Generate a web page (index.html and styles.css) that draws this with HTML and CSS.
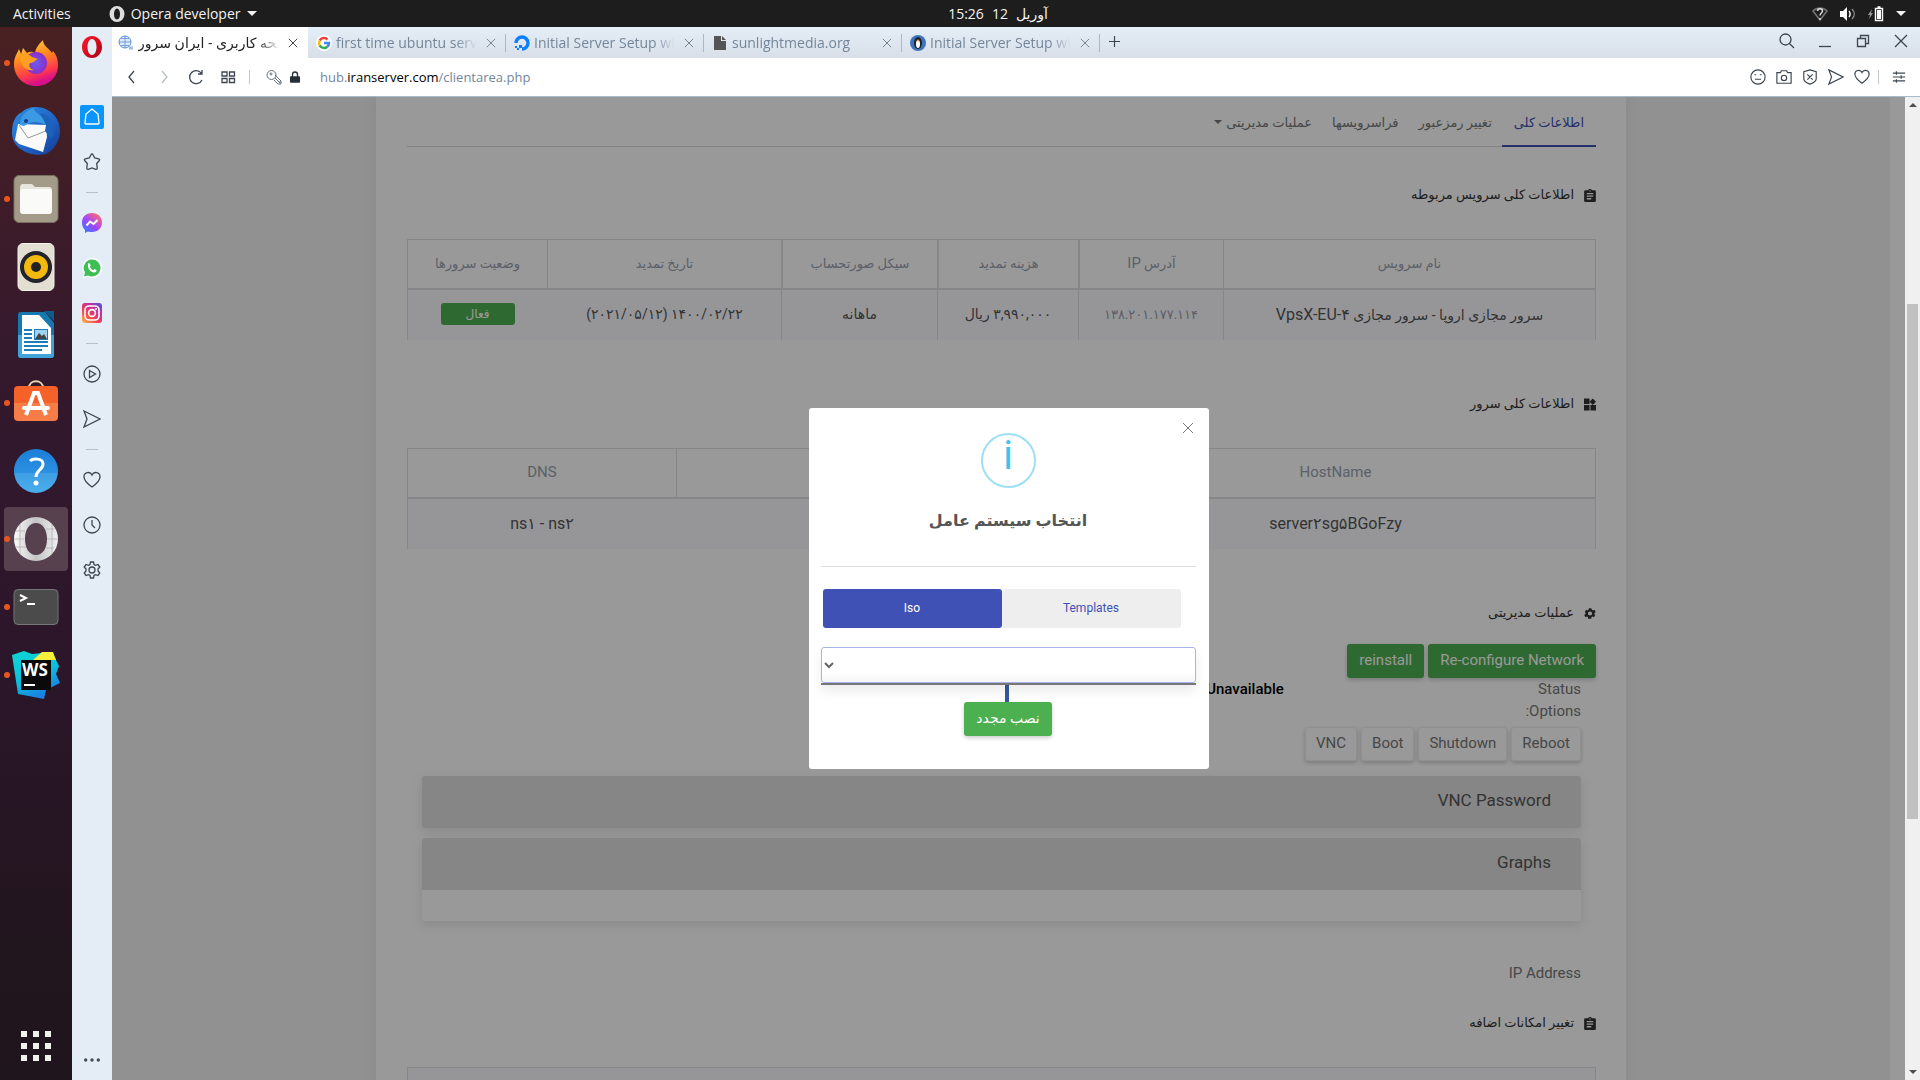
FILE: index.html
```html
<!DOCTYPE html>
<html lang="en">
<head>
<meta charset="utf-8">
<title>ایران سرور</title>
<link rel="stylesheet" href="styles.css">
</head>
<body>
<svg class="defs" aria-hidden="true">
  <defs>
    <linearGradient id="ffBody" x1="0" y1="0" x2="0.3" y2="1"><stop offset="0" stop-color="#ffe14a"/><stop offset="0.45" stop-color="#ff8a1c"/><stop offset="0.8" stop-color="#ff3a4b"/><stop offset="1" stop-color="#d8108a"/></linearGradient>
    <radialGradient id="ffCore"><stop offset="0" stop-color="#6a5cf0"/><stop offset="1" stop-color="#8a2ec8"/></radialGradient>
    <linearGradient id="tb" x1="0" y1="0" x2="1" y2="1"><stop offset="0" stop-color="#2f8fe0"/><stop offset="0.6" stop-color="#1f5fc4"/><stop offset="1" stop-color="#123a8c"/></linearGradient>
    <linearGradient id="soft" x1="0" y1="0" x2="0" y2="1"><stop offset="0.5" stop-color="#f4622a"/><stop offset="0.5" stop-color="#f67c48"/></linearGradient>
    <linearGradient id="help" x1="0" y1="0" x2="0" y2="1"><stop offset="0" stop-color="#1c7fd8"/><stop offset="0.54" stop-color="#2b8fe2"/><stop offset="0.55" stop-color="#3f9ee6"/><stop offset="1" stop-color="#4aaeea"/></linearGradient>
    <linearGradient id="opg" x1="0" y1="0" x2="1" y2="0"><stop offset="0" stop-color="#fafafa"/><stop offset="0.5" stop-color="#c4c4c4"/><stop offset="1" stop-color="#f0f0f0"/></linearGradient>
    <linearGradient id="opr" x1="0" y1="0" x2="1" y2="1"><stop offset="0" stop-color="#ff1b2d"/><stop offset="1" stop-color="#a70014"/></linearGradient>
    <linearGradient id="msg" x1="0" y1="1" x2="0.8" y2="0"><stop offset="0" stop-color="#1b8dff"/><stop offset="0.5" stop-color="#a044ff"/><stop offset="1" stop-color="#ff6c6c"/></linearGradient>
    <linearGradient id="ig" x1="0" y1="1" x2="0.8" y2="0"><stop offset="0" stop-color="#ffc24a"/><stop offset="0.4" stop-color="#f4404e"/><stop offset="0.75" stop-color="#c22fa2"/><stop offset="1" stop-color="#6a4bd0"/></linearGradient>
    <linearGradient id="ws" x1="0" y1="0" x2="0.5" y2="1"><stop offset="0" stop-color="#0ed8d0"/><stop offset="0.6" stop-color="#0cbfe0"/><stop offset="1" stop-color="#1a7fe0"/></linearGradient>
    <symbol id="x" viewBox="0 0 12 12"><path d="M1 1l10 10M11 1L1 11"/></symbol>
    <symbol id="clip" viewBox="3 1 18 20"><path fill="#333" d="M19 3h-4.200C14.400 1.800 13.300 1 12 1s-2.400.8-2.800 2H5a2 2 0 0 0-2 2v14a2 2 0 0 0 2 2h14a2 2 0 0 0 2-2V5a2 2 0 0 0-2-2zm-7 0a1 1 0 1 1 0 2 1 1 0 0 1 0-2zm2 14H7v-2h7zm3-4H7v-2h10zm0-4H7V7h10z"/></symbol>
    <symbol id="heart" viewBox="0 0 18 18"><path d="M9 16C4 12.500 1 9.500 1 6a4.200 4.200 0 0 1 8-2 4.200 4.200 0 0 1 8 2c0 3.500-3 6.500-8 10z"/></symbol>
    <symbol id="send" viewBox="0 0 18 18"><path d="M1 1l16 8-16 8 3-8z"/></symbol>
  </defs>
</svg>

<div class="desktop">
  <header class="topbar">
    <div class="topbar-left">
      <span>Activities</span>
      <span class="app-menu"><svg width="16" height="16" viewBox="0 0 16 16"><path fill="#ddd" fill-rule="evenodd" d="M8 0a7.500 8 0 1 0 0 16A7.500 8 0 0 0 8 0zm0 2.500c2 0 3 2.500 3 5.500s-1 5.500-3 5.500S5 11 5 8s1-5.500 3-5.500z"/></svg>Opera developer <i class="caret"></i></span>
    </div>
    <div class="clock"><span>15:26</span><span>12</span><span lang="fa">آوریل</span></div>
    <div class="tray">
      <svg width="16" height="14" viewBox="0 0 16 14"><path d="M1 4c4-4 10-4 14 0L8 13z" fill="none" stroke="#777" stroke-width="1.500"/><path d="M5.500 4c0-3 5-3 5 0 0 2-2.500 2-2.500 4.500M8 11v2" fill="none" stroke="#ddd" stroke-width="1.500"/></svg>
      <svg width="16" height="14" viewBox="0 0 16 14"><path fill="#fff" d="M0 4h3l4-4v14l-4-4H0z"/><path d="M9 4c1.500 2 1.500 4 0 6" fill="none" stroke="#fff" stroke-width="1.400"/><path d="M12 2c3 3 3 7 0 10" fill="none" stroke="#888" stroke-width="1.400"/></svg>
      <svg width="16" height="16" viewBox="0 0 16 16"><path fill="#999" d="M4 3L0 9h2l-1 4 4-6H3z"/><path d="M7.500 2.500h7v12h-7zM9.500 1h3" fill="none" stroke="#fff" stroke-width="1.400"/><path fill="#fff" d="M9 4h4v9H9z"/></svg>
      <i class="caret"></i>
    </div>
  </header>

  <nav class="dock" aria-label="Dock">
    <span class="tile running"><svg viewBox="0 0 48 48"><path fill="url(#ffBody)" d="M24 47C11 47 2 37 2 25c0-7 3-10 5-15l2 5 2-6 4 5c3-2 6-1 8 0 1-6 5-10 8-13 0 6 6 8 9 13l1-2c4 5 5 9 5 14 0 12-9 21-22 21z"/><circle cx="24" cy="24" r="11" fill="url(#ffCore)"/><path fill="#ffa020" d="M8 17c4-2 9-2 12 1l6 2c-3 1-4 4-8 4-2 3 0 6 4 7-8 2-14-5-14-14z"/></svg></span>
    <span class="tile"><svg viewBox="0 0 48 48"><path fill="url(#tb)" d="M24 0c14 0 24 11 24 24 0 10-6 19-14 23l-9 1C10 46 0 38 0 26 0 14 4 8 10 5c3-3 8-5 14-5z"/><path fill="#fafafa" d="M6 17l28 1 1 12-4 15L7 37 3 33z"/><path d="M7 18l9 13 18-7" fill="none" stroke="#999"/><path fill="#3a9be4" d="M8 18c0-9 6-15 14-17-2 4 12 8 12 17-9-4-14-4-22 1z"/><circle cx="14" cy="14" r="2" fill="#123a8c"/><path fill="#1d62b8" d="M28 6c12 2 16 12 12 26l-7-8 1-6z"/></svg></span>
    <span class="tile running"><svg viewBox="0 0 48 48"><rect x="2" y="0.500" width="44" height="47" rx="5" fill="#a39b87" stroke="#777060"/><path fill="#e8e5dc" d="M8 13q0-4 3-4h9l3 3h14q3 0 3 3v6H8z"/><rect x="8" y="14" width="32" height="25" rx="3" fill="#fafaf8"/></svg></span>
    <span class="tile"><svg viewBox="0 0 48 48"><rect x="6" y="0.500" width="36" height="47" rx="5" fill="#e2ded2" stroke="#f2f0ea"/><circle cx="24" cy="24" r="16" fill="#23232b"/><circle cx="24" cy="24" r="12" fill="#f3b90d"/><circle cx="24" cy="24" r="5" fill="#222"/></svg></span>
    <span class="tile"><svg viewBox="0 0 48 48"><path fill="#1678b0" d="M9 1h24l9 11v32q0 3-3 3H9q-3 0-3-3V4q0-3 3-3z"/><path fill="#42a4d6" d="M6 24h36v20q0 3-3 3H9q-3 0-3-3z"/><path fill="#fff" d="M10 4h17l12 13v26H10z"/><path fill="#0c5c8c" d="M32 0h10v10z"/><path d="M12 19h8M12 23h8M12 27h8M12 31h24M12 35h24M12 39h18" stroke="#1d7cba" stroke-width="2"/><path fill="#1d7cba" d="M22 18h14v11H22z"/><path fill="#9ed4f0" d="M23 19h12v9H23z"/><path fill="#444" d="M23 28l4-6 3 3 2-2 3 5z"/></svg></span>
    <span class="tile running"><svg viewBox="0 0 48 48"><path d="M17 9c0-9 14-9 14 0" fill="none" stroke="#e8d8b0" stroke-width="2"/><rect x="2" y="7" width="44" height="35" rx="4" fill="url(#soft)"/><path d="M14 36l8-22h4l8 22" fill="none" stroke="#fff" stroke-width="4"/><path d="M12 29h24" stroke="#fff" stroke-width="4" stroke-linecap="round"/></svg></span>
    <span class="tile"><svg viewBox="0 0 48 48"><circle cx="24" cy="24" r="22" fill="url(#help)"/><path d="M18 14c3-3 13-3 13 3 0 6-7 6-7 13" fill="none" stroke="#fff" stroke-width="3"/><circle cx="24" cy="36" r="2.500" fill="#fff"/></svg></span>
    <span class="tile running active"><svg viewBox="0 0 48 48"><path fill="url(#opg)" fill-rule="evenodd" d="M24 2a22 22 0 1 0 0 44 22 22 0 0 0 0-44zm0 6c7 0 11 7 11 16s-4 16-11 16-11-7-11-16S17 8 24 8z"/><path d="M4 16h9M2 24h10M4 32h10M34 14h9M35 24h11M34 33h8M8 9v30M40 9v30" stroke="#aaa" stroke-width="0.700"/></svg></span>
    <span class="tile running"><svg viewBox="0 0 48 48"><rect x="2" y="6.500" width="44" height="35" rx="4" fill="#4b4b4b" stroke="#777"/><path d="M8 12l6 3-6 3M15 21h8" fill="none" stroke="#fff" stroke-width="2"/></svg></span>
    <span class="tile running"><svg viewBox="0 0 48 48"><path fill="url(#ws)" d="M0 4l12-4 8 3 20-2 7 14-3 8 4 9-14 7-2 9-26-5z"/><path fill="#f8f03c" d="M21 9l9-8h11l3 8z"/><path fill="#0a0a0a" d="M9 9h30v30H9z"/><text x="10" y="25" class="ws-text">WS</text><path fill="#fff" d="M12 33h11v2H12z"/></svg></span>
    <span class="tile apps"><svg viewBox="0 0 48 48"><path fill="#f2f2ee" d="M9 9h6v6H9zM21 9h6v6h-6zM33 9h6v6h-6zM9 21h6v6H9zM21 21h6v6h-6zM33 21h6v6h-6zM9 33h6v6H9zM21 33h6v6h-6zM33 33h6v6h-6z"/></svg></span>
  </nav>

  <aside class="opera-side">
    <span class="logo"><svg width="20" height="22" viewBox="0 0 20 22"><path fill="url(#opr)" fill-rule="evenodd" d="M10 0C4 0 0 5 0 11s4 11 10 11 10-5 10-11S16 0 10 0zm0 3c3 0 4.500 4 4.500 8S13 19 10 19s-4.500-4-4.500-8S7 3 10 3z"/></svg></span>
    <span class="s-item"><i class="home"><svg class="line" viewBox="0 0 18 18"><path stroke="#fff" d="M9 1l6 5 1 9q0 1-1 1H3q-1 0-1-1l1-9z"/></svg></i></span>
    <span class="s-item"><svg class="line" viewBox="0 0 18 18"><path d="M9 1q.7 0 1 .8L11.700 5l4 .8q1.500.5.600 1.700L13.700 10.500l.5 4.500q0 1.500-1.500 1.300L9 15l-3.700 1.300Q3.800 16.500 3.800 15l.5-4.500L1.700 7.500Q.8 6.300 2.300 5.800l4-.8L8 1.800Q8.300 1 9 1z"/></svg></span>
    <i class="s-div"></i>
    <span class="s-item"><svg width="20" height="20" viewBox="0 0 20 20"><path fill="url(#msg)" d="M10 0c6 0 10 4 10 9.500S16 19 10 19c-1.500 0-3 0-4-.5L3 20v-3C1 15 0 12.500 0 9.500 0 4 4 0 10 0z"/><path d="M4.500 12.500l3.500-4 3.500 2.500 4-4" fill="none" stroke="#fff" stroke-width="2"/></svg></span>
    <span class="s-item"><svg width="20" height="20" viewBox="0 0 20 20"><path fill="#fff" d="M10 0a10 10 0 1 1-4 19l-5 1 1-5A10 10 0 0 1 10 0z"/><path fill="#3fbe55" d="M10 1.500a8.500 8.500 0 1 1-4 16l-4 1 1-4A8.500 8.500 0 0 1 10 1.500z"/><path fill="#fff" d="M6 6q1-2 2 0l.7 1.500-1 1.300q1.300 2.400 3.500 3.400l1.300-1.200 2.200 1.200q0 2.500-3 2.300C8 13.500 5.500 11 6 6z"/></svg></span>
    <span class="s-item"><svg width="20" height="20" viewBox="0 0 20 20"><rect width="20" height="20" rx="3" fill="url(#ig)"/><rect x="3" y="3" width="14" height="14" rx="4" fill="none" stroke="#fff" stroke-width="1.600"/><circle cx="10" cy="10" r="3.400" fill="none" stroke="#fff" stroke-width="1.600"/><circle cx="14" cy="6" r="1" fill="#fff"/></svg></span>
    <i class="s-div"></i>
    <span class="s-item"><svg class="line" viewBox="0 0 18 18"><circle cx="9" cy="9" r="8"/><path d="M6.500 5.500l6 3.500-6 3.500z"/></svg></span>
    <span class="s-item"><svg class="line"><use href="#send"/></svg></span>
    <i class="s-div"></i>
    <span class="s-item"><svg class="line"><use href="#heart"/></svg></span>
    <span class="s-item"><svg class="line" viewBox="0 0 18 18"><circle cx="9" cy="9" r="8"/><path d="M9 4v5l3 3"/></svg></span>
    <span class="s-item"><svg class="line" viewBox="0 0 18 18"><circle cx="9" cy="9" r="3"/><path d="M7.500 1h3l.5 2.500 1.500.8L15 3.500l1.800 2.500L15 8v2l1.800 2-1.800 2.500-2.500-.8-1.500.8-.5 2.500h-3L7 14.500l-1.500-.8-2.500.8L1.200 12 3 10V8L1.200 6 3 3.500l2.500.8L7 3.500z"/></svg></span>
    <span class="more"><svg width="16" height="4" viewBox="0 0 16 4"><path fill="#444c58" d="M0 2a1.700 1.700 0 1 1 3.400 0A1.700 1.700 0 0 1 0 2zM6.300 2a1.700 1.700 0 1 1 3.400 0 1.700 1.700 0 0 1-3.400 0zM12.600 2a1.700 1.700 0 1 1 3.400 0 1.700 1.700 0 0 1-3.400 0z"/></svg></span>
  </aside>

  <main class="browser">
    <div class="tabs">
      <div class="tab current"><svg class="fav" viewBox="0 0 16 16"><circle cx="7" cy="7" r="6" fill="#dfeafa" stroke="#5b8fd6"/><path d="M7 1v12M1 7h12M3 3.500h8M3 10.500h8" stroke="#5b8fd6" stroke-width="0.800"/><path d="M11 13h4" stroke="#9bbce8" stroke-width="3"/></svg><span class="tab-title"><bdi dir="rtl" lang="fa">صفحه کاربری - ایران سرور</bdi></span><button class="tab-x" aria-label="Close tab"><svg><use href="#x"/></svg></button></div>
      <div class="tab"><svg class="fav" viewBox="0 0 16 16"><circle cx="8" cy="8" r="8" fill="#fff"/><g fill="none" stroke-width="2.500"><path stroke="#ea4335" d="M3.700 5.500A5 5 0 0 1 11.500 4.500"/><path stroke="#fbbc05" d="M3.700 5.500a5 5 0 0 0 0 5"/><path stroke="#34a853" d="M3.700 10.500a5 5 0 0 0 7.600 1.200"/><path stroke="#4285f4" d="M8 8h5a5 5 0 0 1-1.700 3.700"/></g></svg><span class="tab-title">first time ubuntu server setup</span><button class="tab-x" aria-label="Close tab"><svg><use href="#x"/></svg></button></div>
      <div class="tab"><svg class="fav" viewBox="0 0 16 16"><path d="M8 14A6 6 0 1 0 2 8" fill="none" stroke="#0a80ff" stroke-width="3.400"/><path fill="#0a80ff" d="M5 10h3v3H5zM3 13h2v2H3zM1 11h2v2H1z"/></svg><span class="tab-title">Initial Server Setup with Ubuntu</span><button class="tab-x" aria-label="Close tab"><svg><use href="#x"/></svg></button></div>
      <div class="tab"><svg class="fav" viewBox="0 0 16 16"><path fill="#555" d="M2 1h7v5h5v9H2z"/><path fill="#555" d="M10 1l4 4h-4z"/></svg><span class="tab-title">sunlightmedia.org</span><button class="tab-x" aria-label="Close tab"><svg><use href="#x"/></svg></button></div>
      <div class="tab"><svg class="fav" viewBox="0 0 16 16"><circle cx="8" cy="8" r="8" fill="#3f74b8"/><ellipse cx="8" cy="8" rx="4" ry="6" fill="#1c2430"/><ellipse cx="8" cy="9" rx="2" ry="4" fill="#fff"/><circle cx="8" cy="5.500" r="1" fill="#f0a020"/></svg><span class="tab-title">Initial Server Setup with Ubuntu</span><button class="tab-x" aria-label="Close tab"><svg><use href="#x"/></svg></button></div>
      <button class="new-tab" aria-label="New tab"><svg class="line" viewBox="0 0 12 12"><path d="M6 0v12M0 6h12"/></svg></button>
      <div class="win">
        <svg class="line" viewBox="0 0 16 16"><circle cx="6.500" cy="6.500" r="5.500"/><path d="M10.500 10.500L15 15"/></svg>
        <svg class="line" viewBox="0 0 16 16"><path d="M2 13.500h12"/></svg>
        <svg class="line" viewBox="0 0 16 16"><path d="M2.500 5.500h8v8h-8zM5.500 5V2.500h8v8H11"/></svg>
        <svg class="line" viewBox="0 0 16 16"><path d="M2 2l12 12M14 2L2 14"/></svg>
      </div>
    </div>
    <div class="address">
      <div class="nav-icons">
        <svg class="line" viewBox="0 0 16 16"><path d="M10 2L5 8l5 6"/></svg>
        <svg class="line dim" viewBox="0 0 16 16"><path d="M6 2l5 6-5 6"/></svg>
        <svg class="line" viewBox="0 0 16 16"><path d="M13.500 4.500A6.500 6.500 0 1 0 14 11M14 1v4h-4"/></svg>
        <svg class="line" viewBox="0 0 16 16"><path d="M2 3h5v4H2zM9.500 3h5v4h-5zM2 9.500h5v4H2zM9.500 9.500h5v4h-5z"/></svg>
      </div>
      <i class="v-div"></i>
      <svg class="key" viewBox="0 0 16 16"><circle cx="5.500" cy="6" r="4.500"/><circle cx="5" cy="5" r="1"/><path d="M9 9l5 5v-2M9 6l6 6v3h-3l-4-4"/></svg>
      <svg class="lock" viewBox="0 0 12 14"><path fill="#263038" d="M1 6h10q1 0 1 1v6q0 1-1 1H1q-1 0-1-1V7q0-1 1-1z"/><path d="M3 7V4a3 3 0 0 1 6 0v3" fill="none" stroke="#263038" stroke-width="1.600"/></svg>
      <span class="url">hub.<b>iranserver.com</b>/clientarea.php</span>
      <div class="addr-icons">
        <svg class="line" viewBox="0 0 18 18"><circle cx="9" cy="9" r="8"/><path d="M5 6.500h2M11 6.500h2M5.500 11.500h7"/></svg>
        <svg class="line" viewBox="0 0 18 18"><path d="M1 4h4l1-2h6l1 2h4v12H1z"/><circle cx="9" cy="10" r="3"/></svg>
        <svg class="line" viewBox="0 0 18 18"><path d="M9 1l7 2v8c0 3-4 5-7 6-3-1-7-3-7-6V3zM6 6l6 6M12 6l-6 6"/></svg>
        <svg class="line"><use href="#send"/></svg>
        <svg class="line"><use href="#heart"/></svg>
      </div>
      <i class="v-div"></i>
      <svg class="line sliders" viewBox="0 0 16 16"><path d="M1 3.500h14M1 8h14M1 12.500h14M5 1.500v4M10.500 6v4M5 10.500v4"/></svg>
    </div>

    <div class="viewport">
      <div class="page" dir="rtl" lang="fa">
        <article class="card">
          <nav class="sub-nav">
            <a href="#" class="on">اطلاعات کلی</a>
            <a href="#">تغییر رمزعبور</a>
            <a href="#">فراسرویسها</a>
            <a href="#">عملیات مدیریتی <i class="caret small"></i></a>
          </nav>

          <h2 class="first"><svg><use href="#clip"/></svg>اطلاعات کلی سرویس مربوطه</h2>
          <table class="service">
            <thead><tr><th>نام سرویس</th><th>آدرس <bdi>IP</bdi></th><th>هزینه تمدید</th><th>سیکل صورتحساب</th><th>تاریخ تمدید</th><th>وضعیت سرورها</th></tr></thead>
            <tbody><tr><td>سرور مجازی اروپا - سرور مجازی <bdi dir="ltr">VpsX-EU-۴</bdi></td><td class="ip">۱۳۸.۲۰۱.۱۷۷.۱۱۴</td><td>۳,۹۹۰,۰۰۰ ریال</td><td>ماهانه</td><td class="open">۱۴۰۰/۰۲/۲۲ (۲۰۲۱/۰۵/۱۲)</td><td><span class="badge">فعال</span></td></tr></tbody>
          </table>

          <h2><svg viewBox="0 0 13 13"><path fill="#333" d="M0 0h6v6H0zM0 7h6v6H0zM7 7h6v6H7zM9.500 0L13 3.500 9.500 7 6 3.500z"/></svg>اطلاعات کلی سرور</h2>
          <table class="server">
            <thead><tr><th><bdi>HostName</bdi></th><th></th><th><bdi>DNS</bdi></th></tr></thead>
            <tbody><tr><td class="open"><bdi dir="ltr">server۲sg۵BGoFzy</bdi></td><td class="open"></td><td><bdi dir="ltr">ns۱ - ns۲</bdi></td></tr></tbody>
          </table>

          <h2 class="tight"><svg viewBox="2 2 20 20"><path fill="#333" d="M19.400 13a7.500 7.500 0 0 0 0-2l2.100-1.600-2-3.500-2.500 1a7 7 0 0 0-1.700-1L14 3.200h-4l-.4 2.700a7 7 0 0 0-1.700 1l-2.500-1-2 3.500L4.600 11a7.500 7.500 0 0 0 0 2l-2.200 1.600 2 3.500 2.500-1a7 7 0 0 0 1.700 1l.4 2.700h5l.4-2.700a7 7 0 0 0 1.700-1l2.500 1 2-3.500zM12 15.500a3.500 3.500 0 1 1 0-7 3.500 3.500 0 0 1 0 7z"/></svg>عملیات مدیریتی</h2>
          <div class="actions"><button class="btn green">Re-configure Network</button><button class="btn green">reinstall</button></div>
          <div class="info"><span>Status</span><strong>Unavailable</strong><span>Options:</span></div>
          <div class="options"><button class="btn plain">Reboot</button><button class="btn plain">Shutdown</button><button class="btn plain">Boot</button><button class="btn plain">VNC</button></div>
          <section class="panel"><h3>VNC Password</h3></section>
          <section class="panel"><h3>Graphs</h3><div class="panel-body"></div></section>
          <p class="ip-label">IP Address</p>
          <h2 class="last"><svg><use href="#clip"/></svg>تغییر امکانات اضافه</h2>
          <div class="extra"></div>
        </article>
      </div>

      <div class="overlay">
        <div class="modal" role="dialog" aria-label="انتخاب سیستم عامل">
          <button class="close" aria-label="Close"><svg><use href="#x"/></svg></button>
          <div class="info-icon">i</div>
          <h1 lang="fa" dir="rtl">انتخاب سیستم عامل</h1>
          <hr>
          <div class="switch"><button class="sel">Iso</button><button>Templates</button></div>
          <div class="select-wrap">
            <select aria-label="Iso"><option></option></select>
            <svg viewBox="0 0 10 8"><path d="M1 2l4 4 4-4" fill="none" stroke="#666" stroke-width="2"/></svg>
          </div>
          <i class="stem"></i>
          <button class="btn green submit" lang="fa" dir="rtl">نصب مجدد</button>
        </div>
      </div>

      <div class="scrollbar"><i class="up"></i><i class="thumb"></i><i class="down"></i></div>
    </div>
  </main>
</div>
</body>
</html>
```
FILE: styles.css
```css
* { box-sizing: border-box; }
body { margin: 0; font-family: "Open Sans", "DejaVu Sans", sans-serif; font-size: 14px; }
.defs { position: absolute; width: 0; height: 0; }
svg { display: block; flex: none; }
i { display: block; flex: none; }
button { font: inherit; padding: 0; border: 0; background: none; }

.desktop {
  display: grid;
  grid-template: 27px minmax(0, 1fr) / 72px 40px minmax(0, 1fr);
  height: 100vh;
  overflow: hidden;
}

/* system bar */
.topbar {
  grid-column: 1 / -1;
  display: grid;
  grid-template-columns: 1fr auto 1fr;
  align-items: center;
  padding: 0 14px 0 13px;
  background: #1d1d1d;
  color: #f2f2f2;
}
.topbar-left { display: flex; gap: 38px; }
.app-menu { display: flex; align-items: center; gap: 6px; }
.clock { display: flex; gap: 8px; padding-left: 77px; }
.tray { display: flex; justify-content: flex-end; align-items: center; gap: 12px; }
.caret { width: 0; border: 5px solid transparent; border-top-color: currentColor; border-bottom: 0; }

/* dock */
.dock {
  display: flex;
  flex-direction: column;
  align-items: center;
  gap: 4px;
  padding: 4px 0 2px;
  background: linear-gradient(#4a2122, #35192d 30%, #2c162a 60%, #22151f 85%, #1f151c);
}
.tile { position: relative; display: grid; place-items: center; width: 64px; height: 64px; border-radius: 4px; }
.tile svg { width: 48px; height: 48px; }
.tile.active { background: #57414f; }
.tile.running::before {
  content: "";
  position: absolute;
  left: 0;
  width: 6px;
  height: 6px;
  border-radius: 50%;
  background: #e95420;
}
.tile.apps { margin-top: auto; }
.ws-text { font: bold 17px "Open Sans", sans-serif; fill: #fff; }

/* browser sidebar */
.opera-side { display: flex; flex-direction: column; align-items: center; background: #e4ecf5; }
.logo { padding: 9px 0 36px; }
.s-item { display: grid; place-items: center; height: 45px; }
.home { display: grid; place-items: center; width: 24px; height: 24px; border-radius: 2px; background: #0a96ff; }
.s-div { width: 12px; height: 16px; background: linear-gradient(#b4c2d0, #b4c2d0) center / 12px 1px no-repeat; }
.more { margin-top: auto; padding-bottom: 18px; }
.line { width: 18px; height: 18px; fill: none; stroke: #3d4650; stroke-width: 1.3; }

/* tabs */
.browser { display: grid; grid-template-rows: 31px 39px minmax(0, 1fr); background: #fff; }
.tabs { display: flex; background: linear-gradient(#e4eef6, #d8dfe9); }
.tab {
  display: flex;
  align-items: center;
  gap: 4px;
  width: 198px;
  padding: 0 5px 0 8px;
  color: #74869a;
  background: linear-gradient(#a9b8c6, #a9b8c6) right / 1px 18px no-repeat;
}
.tab.current { width: 196px; padding-left: 6px; background: #fff; color: #222; }
.fav { width: 16px; height: 16px; }
.tab-title {
  flex: 1;
  min-width: 0;
  overflow: hidden;
  white-space: nowrap;
  -webkit-mask-image: linear-gradient(90deg, #000 85%, transparent);
  mask-image: linear-gradient(90deg, #000 85%, transparent);
}
.tab-title bdi { display: inline-block; }
.tab-x { display: grid; place-items: center; width: 20px; height: 20px; }
.tab-x svg { width: 10px; height: 10px; stroke: #66727e; }
.current .tab-x svg { stroke: #222; }
.new-tab { padding: 0 8px 2px 9px; }
.new-tab svg { width: 11px; height: 11px; }
.win { display: flex; align-items: center; gap: 22px; margin-left: auto; padding: 0 11px 4px 0; }
.win svg { width: 16px; height: 16px; }

/* address bar */
.address { display: flex; align-items: center; padding-right: 14px; border-bottom: 1px solid #aab9c7; }
.nav-icons { display: flex; gap: 16px; padding: 0 13px 0 12px; }
.nav-icons svg { width: 16px; height: 16px; }
.dim { stroke: #b8bec4; }
.v-div { width: 1px; height: 14px; background: #c2c8ce; }
.key { width: 16px; height: 16px; margin: 0 8px 0 16px; fill: none; stroke: #667078; }
.lock { width: 10px; height: 14px; }
.url { padding-left: 20px; font-size: 13px; color: #74869a; }
.url b { font-weight: 400; color: #000; }
.addr-icons { display: flex; gap: 10px; margin-left: auto; padding-right: 8px; }
.addr-icons svg { width: 16px; height: 16px; }
.sliders { width: 14px; height: 16px; margin-left: 13px; }

/* web page */
.viewport {
  position: relative;
  display: grid;
  grid-template: minmax(0, 1fr) / minmax(0, 1fr) 15px;
}
.page {
  grid-area: 1 / 1;
  overflow: hidden;
  border-right: 15px solid #fff;
  background: #f2f2f2;
  font-family: Roboto, "DejaVu Sans", sans-serif;
}
.card {
  max-width: 1250px;
  min-height: 1000px;
  margin: 0 auto;
  padding: 0 30px 0 31px;
  background: #fff;
  box-shadow: 0 0 12px #dfe4e0;
}
.sub-nav { display: flex; border-bottom: 1px solid #dcdcdc; font-size: 13px; }
.sub-nav a {
  display: flex;
  align-items: center;
  gap: 4px;
  height: 50px;
  margin-bottom: -1px;
  padding: 2px 10px 0;
  border-bottom: 2px solid transparent;
  color: #777;
  text-decoration: none;
}
.sub-nav .on { padding: 2px 12px 0; border-color: #3f51b5; color: #3f51b5; }
.caret.small { border-width: 4px; border-bottom: 0; }

h2 {
  display: flex;
  align-items: center;
  gap: 10px;
  margin: 52px 0 32px;
  font-size: 13px;
  font-weight: 400;
  line-height: 24px;
  color: #333;
}
h2 svg { width: 12px; height: 13px; }
h2.first { margin-top: 36px; }
h2.tight { margin-bottom: 19px; }
h2.last { margin: 27px 0 32px; }

table { width: 100%; table-layout: fixed; border-spacing: 0; border-right: 1px solid #dee0e2; font-size: 13px; text-align: center; }
th, td { padding: 0 0 2px; border-left: 1px solid #dee0e2; white-space: nowrap; }
th { height: 51px; border-top: 1px solid #dee0e2; border-bottom: 2px solid #dee0e2; font-weight: 400; color: #9a9fae; }
th bdi { font-size: 15px; }
td { height: 50px; background: #fafaff; color: #555; font-size: 14px; }
td bdi { font-size: 16px; }
td.open { border-left-color: transparent; }
td.ip { color: #9a9fae; font-size: 13px; }
.service th:nth-child(2) { width: 145px; border-left-width: 2px; }
.service th:nth-child(3) { width: 141px; border-left-width: 2px; }
.service th:nth-child(4) { width: 156px; border-left-width: 2px; }
.service th:nth-child(5) { width: 234px; }
.service th:nth-child(6) { width: 140px; }
.server th:nth-child(2) { width: 399px; }
.server th:nth-child(3) { width: 269px; }
.badge { display: block; width: 74px; margin: 0 auto; border-radius: 3px; background: #4caf50; color: #fff; font-size: 12px; line-height: 22px; }

.btn { height: 34px; padding: 0 12px 2px; border-radius: 3px; font-size: 15px; box-shadow: 0 2px 4px rgba(0, 0, 0, .2); }
.green { background: #4caf50; color: #fff; }
.plain { padding: 0 10px 2px; border: 1px solid #f0f0f0; background: #fff; color: #777; }
.actions { display: flex; gap: 4px; }
.info { display: grid; grid-template-columns: 1fr 3fr; font-size: 15px; line-height: 22px; color: #777; }
.info > * { padding: 0 15px; }
.info strong { font-weight: 500; color: #000; }
.options { display: flex; gap: 4px; padding: 5px 15px 15px; }
.panel { margin: 0 15px 10px; border-radius: 3px; overflow: hidden; box-shadow: 0 4px 12px rgba(0, 0, 0, .1); }
.panel h3 { margin: 0; padding: 0 30px 4px; background: #dfdfdf; color: #555; font-size: 17px; font-weight: 400; line-height: 48px; }
.panel-body { height: 31px; }
.ip-label { margin: 41px 15px 0; font-size: 15px; line-height: 22px; color: #777; }
.extra { height: 100px; border: 1px solid #dee0e2; background: #fafaff; }

/* dialog */
.overlay { grid-area: 1 / 1; display: grid; place-items: center; background: rgba(0, 0, 0, .4); z-index: 1; }
.modal {
  position: relative;
  display: flex;
  flex-direction: column;
  align-items: center;
  width: 400px;
  padding: 25px 13px 33px 12px;
  border-radius: 3px;
  background: #fff;
  font-family: Roboto, "DejaVu Sans", sans-serif;
}
.close { position: absolute; top: 14px; right: 15px; }
.close svg { width: 12px; height: 12px; stroke: #777; }
.info-icon { width: 55px; height: 55px; border: 2px solid #9de0f6; border-radius: 50%; color: #3fc3ee; font-size: 40px; line-height: 42px; text-align: center; }
.modal h1 { margin: 21px 0 33px; font-size: 16px; line-height: 24px; color: #555; }
.modal hr { width: 100%; height: 1px; margin: 0 0 22px; border: 0; background: #dcdcdc; }
.switch { display: flex; align-self: stretch; padding: 0 15px 0 2px; }
.switch button { flex: 1; height: 39px; padding-bottom: 2px; border-radius: 3px; background: #eee; color: #3f51b5; font-size: 12px; }
.switch .sel { background: #3f51b5; color: #fff; }
.select-wrap { position: relative; align-self: stretch; margin-top: 19px; border-bottom: 2px solid #777; box-shadow: 0 6px 12px rgba(0, 0, 0, .08); }
.select-wrap select { display: block; width: 100%; height: 36px; appearance: none; border: 1px solid #a9b4ee; border-radius: 3px; background: linear-gradient(#fff 75%, #f5f5f5); }
.select-wrap svg { position: absolute; left: 3px; top: 14px; width: 10px; height: 8px; }
.stem { width: 4px; height: 17px; margin-right: 3px; background: #34589a; }
.submit { font-size: 14px; }

/* scrollbar */
.scrollbar { grid-area: 1 / 2; display: flex; flex-direction: column; align-items: center; padding: 6px 1px; background: #f0f0f0; }
.up, .down { width: 0; border: 4px solid transparent; }
.up { border-top: 0; border-bottom-color: #505050; }
.down { border-bottom: 0; border-top-color: #505050; margin-top: auto; }
.thumb { width: 11px; height: 53%; margin-top: 197px; background: #c1c1c1; }
```
